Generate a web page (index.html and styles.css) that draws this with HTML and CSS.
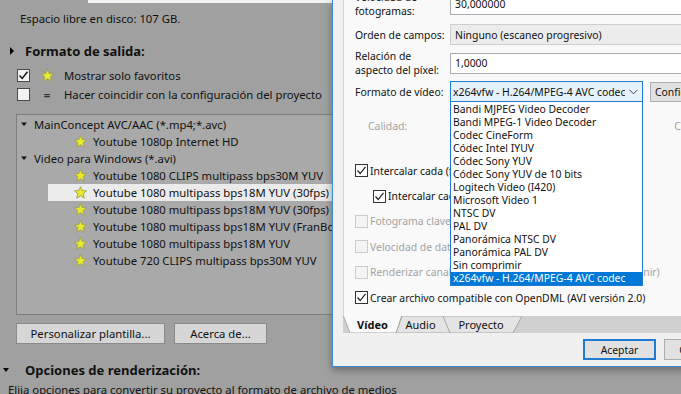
FILE: index.html
```html
<!DOCTYPE html>
<html lang="es">
  <head>
    <meta charset="UTF-8" />
    <meta name="viewport" content="width=device-width, initial-scale=1.0" />
    <title>Renderizar como - Formato de vídeo</title>
    <link rel="stylesheet" href="styles.css">
  </head>
  <body>
    <div class="screen">
      <!-- pagina de fondo (atenuada) -->
      <div class="page">
        <div class="top-field"></div>
        <p class="disk">Espacio libre en disco: 107 GB.</p>

        <h2 class="section">
          <span class="toggle"><svg width="5" height="8" viewBox="0 0 5 8"><polygon points="0,0 4,4 0,8" fill="#000"/></svg></span>
          Formato de salida:
        </h2>
        <div class="opt">
          <span class="box checked"><svg width="11" height="11" viewBox="0 0 11 11"><polyline points="1.5,5.5 4.2,8.5 9.5,1.8" fill="none" stroke="#111" stroke-width="1.4"/></svg></span>
          <span class="opt-icon"><svg class="star" width="13" height="13" viewBox="0 0 12 12"><polygon points="6,0.6 7.6,4.2 11.5,4.5 8.5,7.1 9.5,11.2 6,9 2.5,11.2 3.5,7.1 0.5,4.5 4.4,4.2" /></svg></span>
          Mostrar solo favoritos
        </div>
        <div class="opt">
          <span class="box"></span>
          <span class="opt-icon eq">=</span>
          Hacer coincidir con la configuración del proyecto
        </div>

        <div class="tree">
          <div class="group"><svg width="7" height="5" viewBox="0 0 7 5"><polygon points="0,0.5 6,0.5 3,4" fill="#111"/></svg>MainConcept AVC/AAC (*.mp4;*.avc)</div>
          <div class="item"><svg class="star" width="13" height="13" viewBox="0 0 12 12"><polygon points="6,0.6 7.6,4.2 11.5,4.5 8.5,7.1 9.5,11.2 6,9 2.5,11.2 3.5,7.1 0.5,4.5 4.4,4.2" /></svg>Youtube 1080p Internet HD</div>
          <div class="group"><svg width="7" height="5" viewBox="0 0 7 5"><polygon points="0,0.5 6,0.5 3,4" fill="#111"/></svg>Video para Windows (*.avi)</div>
          <div class="item"><svg class="star" width="13" height="13" viewBox="0 0 12 12"><polygon points="6,0.6 7.6,4.2 11.5,4.5 8.5,7.1 9.5,11.2 6,9 2.5,11.2 3.5,7.1 0.5,4.5 4.4,4.2" /></svg>Youtube 1080 CLIPS multipass bps30M YUV</div>
          <div class="item hover"><svg class="star" width="13" height="13" viewBox="0 0 12 12"><polygon points="6,0.6 7.6,4.2 11.5,4.5 8.5,7.1 9.5,11.2 6,9 2.5,11.2 3.5,7.1 0.5,4.5 4.4,4.2" /></svg>Youtube 1080 multipass bps18M YUV (30fps)</div>
          <div class="item"><svg class="star" width="13" height="13" viewBox="0 0 12 12"><polygon points="6,0.6 7.6,4.2 11.5,4.5 8.5,7.1 9.5,11.2 6,9 2.5,11.2 3.5,7.1 0.5,4.5 4.4,4.2" /></svg>Youtube 1080 multipass bps18M YUV (30fps)</div>
          <div class="item"><svg class="star" width="13" height="13" viewBox="0 0 12 12"><polygon points="6,0.6 7.6,4.2 11.5,4.5 8.5,7.1 9.5,11.2 6,9 2.5,11.2 3.5,7.1 0.5,4.5 4.4,4.2" /></svg>Youtube 1080 multipass bps18M YUV (FranBox)</div>
          <div class="item"><svg class="star" width="13" height="13" viewBox="0 0 12 12"><polygon points="6,0.6 7.6,4.2 11.5,4.5 8.5,7.1 9.5,11.2 6,9 2.5,11.2 3.5,7.1 0.5,4.5 4.4,4.2" /></svg>Youtube 1080 multipass bps18M YUV</div>
          <div class="item"><svg class="star" width="13" height="13" viewBox="0 0 12 12"><polygon points="6,0.6 7.6,4.2 11.5,4.5 8.5,7.1 9.5,11.2 6,9 2.5,11.2 3.5,7.1 0.5,4.5 4.4,4.2" /></svg>Youtube 720 CLIPS multipass bps30M YUV</div>
        </div>

        <div class="page-buttons">
          <button class="page-btn wide">Personalizar plantilla...</button>
          <button class="page-btn">Acerca de...</button>
        </div>

        <h2 class="section second">
          <span class="toggle"><svg width="6" height="4" viewBox="0 0 6 4"><polygon points="0,0 6,0 3,4" fill="#000"/></svg></span>
          Opciones de renderización:
        </h2>
        <p class="desc">Elija opciones para convertir su proyecto al formato de archivo de medios</p>
      </div>

      <!-- dialogo de plantilla -->
      <div class="dialog">
        <div class="tabpage">
          <div class="row first">
            <span class="lbl">Velocidad de<br>fotogramas:</span>
            <span class="field">30,000000</span>
          </div>
          <div class="row r2">
            <span class="lbl">Orden de campos:</span>
            <span class="field readonly">Ninguno (escaneo progresivo)</span>
          </div>
          <div class="row r3">
            <span class="lbl">Relación de<br>aspecto del píxel:</span>
            <span class="field">1,0000</span>
          </div>
          <div class="row r4">
            <span class="lbl">Formato de vídeo:</span>
            <span class="select">
              <span class="select-text">x264vfw - H.264/MPEG-4 AVC codec</span>
              <svg width="9" height="6" viewBox="0 0 9 6"><polyline points="0.5,0.8 4.5,4.8 8.5,0.8" fill="none" stroke="#444" stroke-width="1"/></svg>
            </span>
            <button class="dlg-btn config">Configurar...</button>
          </div>
          <div class="quality">
            <span>Calidad:</span>
            <span class="q2">Cuantificador:</span>
          </div>

          <div class="checks">
            <div class="chk"><span class="cb on"><svg width="11" height="11" viewBox="0 0 11 11"><polyline points="1.5,5.5 4.2,8.5 9.5,1.8" fill="none" stroke="#222" stroke-width="1.2"/></svg></span>Intercalar cada (fotogramas): 1</div>
            <div class="chk sub"><span class="cb on"><svg width="11" height="11" viewBox="0 0 11 11"><polyline points="1.5,5.5 4.2,8.5 9.5,1.8" fill="none" stroke="#222" stroke-width="1.2"/></svg></span>Intercalar cada bloque de audio</div>
            <div class="chk off"><span class="cb"></span>Fotograma clave cada (fotogramas)</div>
            <div class="chk off"><span class="cb"></span>Velocidad de datos (KB/segundo)</div>
            <div class="chk off"><span class="cb"></span>Renderizar canal alfa (si el códec lo permite y sin predefinir)</div>
            <div class="chk"><span class="cb on"><svg width="11" height="11" viewBox="0 0 11 11"><polyline points="1.5,5.5 4.2,8.5 9.5,1.8" fill="none" stroke="#222" stroke-width="1.2"/></svg></span>Crear archivo compatible con OpenDML (AVI versión 2.0)</div>
          </div>
        </div>

        <div class="tabstrip">
          <svg class="tab-shapes" width="400" height="17" viewBox="0 0 400 17">
            <polygon points="97,0 179,0 170,17 107,17" fill="#e4e4e4" stroke="#a8a8a8" stroke-width="1"/>
            <polygon points="59,0 100,0 107,17 53,17" fill="#e4e4e4" stroke="#a8a8a8" stroke-width="1"/>
            <polygon points="0,-1 59,-1 53,17 7,17" fill="#f9f9f9" stroke="#a8a8a8" stroke-width="1"/>
          </svg>
          <span class="tab active">Vídeo</span>
          <span class="tab">Audio</span>
          <span class="tab">Proyecto</span>
        </div>

        <div class="footer">
          <button class="dlg-btn default">Aceptar</button>
          <button class="dlg-btn">Cancelar</button>
        </div>

        <!-- lista desplegable abierta -->
        <ul class="dropdown">
          <li>Bandi MJPEG Video Decoder</li>
          <li>Bandi MPEG-1 Video Decoder</li>
          <li>Codec CineForm</li>
          <li>Códec Intel IYUV</li>
          <li>Códec Sony YUV</li>
          <li>Códec Sony YUV de 10 bits</li>
          <li>Logitech Video (I420)</li>
          <li>Microsoft Video 1</li>
          <li>NTSC DV</li>
          <li>PAL DV</li>
          <li>Panorámica NTSC DV</li>
          <li>Panorámica PAL DV</li>
          <li>Sin comprimir</li>
          <li class="selected">x264vfw - H.264/MPEG-4 AVC codec</li>
        </ul>
      </div>
    </div>
  </body>
</html>
```

FILE: styles.css
```css
/* styles.css */
body {
  margin: 0;
  font-family: "Noto Sans", "Open Sans", sans-serif;
  font-size: 11.3px;
  color: #111;
  background: #9f9f9f;
}

.screen {
  position: relative;
  width: 681px;
  height: 394px;
  overflow: hidden;
  background: #a0a0a0;
}

/* ---- pagina atenuada ---- */
.page {
  width: 681px;
}

.top-field {
  margin-left: 88px;
  width: 260px;
  height: 3px;
  background: #f2f2f2;
}

.disk {
  margin: 8px 0 0 20px;
  line-height: 16px;
}

.section {
  display: flex;
  align-items: center;
  margin: 15px 0 0;
  height: 18px;
  font-size: 13px;
  font-weight: bold;
}

.section .toggle {
  display: flex;
  justify-content: center;
  width: 25px;
}

.section.second {
  margin-top: 17px;
}

.section.second .toggle {
  justify-content: flex-start;
  padding-left: 3px;
  box-sizing: border-box;
}

.opt {
  display: flex;
  align-items: center;
  height: 19px;
  padding-left: 17px;
}

.section + .opt {
  margin-top: 6px;
}

.box {
  width: 11px;
  height: 11px;
  border: 1px solid #4a4a4a;
  background: #f3f3f3;
  display: flex;
  align-items: center;
  justify-content: center;
}

.opt-icon {
  width: 34px;
  display: flex;
  justify-content: center;
}

.eq {
  font-weight: bold;
  color: #333;
}

.star {
  fill: #e9ea2c;
  stroke: #9d9c55;
  stroke-width: 0.8;
}

.tree {
  margin: 10px 0 0 16px;
  width: 340px;
  height: 198px;
  border: 1px solid #7e7e7e;
  background: #a9a9a9;
  padding-top: 1px;
  white-space: nowrap;
}

.group {
  display: flex;
  align-items: center;
  height: 17px;
  padding-left: 4px;
}

.group svg {
  margin-right: 6px;
}

.item {
  display: flex;
  align-items: center;
  height: 17px;
  margin-left: 31px;
  padding-left: 26px;
}

.item .star {
  margin-right: 6px;
}

.item.hover {
  background: #ebebeb;
}

.page-buttons {
  display: flex;
  gap: 9px;
  margin: 8px 0 0 16px;
}

.page-btn {
  height: 21px;
  width: 93px;
  padding: 0;
  font: inherit;
  color: #111;
  background: #d6d6d6;
  border: 1px solid #8a8a8a;
}

.page-btn.wide {
  width: 149px;
}

.desc {
  margin: 3px 0 0 8px;
  line-height: 16px;
  white-space: nowrap;
}

/* ---- dialogo ---- */
.dialog {
  position: absolute;
  left: 332px;
  top: 0;
  width: 420px;
  height: 366px;
  font-size: 10.4px;
  background: #f0f0f0;
  border-left: 1px solid #3d8ad6;
  border-bottom: 1px solid #3d8ad6;
  box-shadow: 0 3px 8px rgba(0, 0, 0, 0.35);
}

.tabpage {
  margin-left: 10px;
  height: 316px;
  background: #f9f9f9;
  border-left: 1px solid #d4d4d4;
  padding-left: 11px;
  overflow: hidden;
}

.row {
  display: flex;
  align-items: center;
  line-height: 14px;
}

.row.first {
  height: 22px;
  margin-top: -7px;
}

.row.r2 {
  height: 21px;
  margin-top: 9px;
}

.row.r3 {
  height: 28px;
  margin-top: 4px;
}

.row.r4 {
  height: 21px;
  margin-top: 4px;
}

.lbl {
  width: 95px;
  flex: none;
}

.field {
  flex: none;
  width: 300px;
  height: 21px;
  box-sizing: border-box;
  border: 1px solid #a9abb1;
  background: #fff;
  padding-left: 4px;
  display: flex;
  align-items: center;
}

.field.readonly {
  background: #ececec;
  border-color: #cdcdcd;
}

.select {
  flex: none;
  width: 193px;
  height: 21px;
  box-sizing: border-box;
  border: 1px solid #1f7ad2;
  background: #e5f1fb;
  display: flex;
  align-items: center;
  padding: 0 4px 0 2px;
  overflow: hidden;
}

.select-text {
  flex: 1;
  overflow: hidden;
  white-space: nowrap;
}

.select svg {
  margin-left: 4px;
}

.dlg-btn {
  flex: none;
  width: 73px;
  height: 21px;
  padding: 0;
  font: inherit;
  color: #111;
  background: #e1e1e1;
  border: 1px solid #adadad;
}

.dlg-btn.config {
  width: 80px;
  height: 20px;
  margin-left: 7px;
  text-align: left;
  padding-left: 4px;
}

.quality {
  display: flex;
  margin-top: 17px;
  padding-left: 13px;
  line-height: 14px;
  color: #a3a3a3;
}

.quality .q2 {
  margin-left: 267px;
}

.checks {
  margin-top: 25px;
}

.chk {
  display: flex;
  align-items: center;
  height: 25.4px;
  white-space: nowrap;
}

.chk.sub {
  padding-left: 18px;
}

.chk.off {
  color: #a3a3a3;
}

.cb {
  flex: none;
  width: 11px;
  height: 11px;
  border: 1px solid #333;
  background: #fff;
  margin-right: 2px;
  display: flex;
  align-items: center;
  justify-content: center;
}

.chk.off .cb {
  border-color: #cccccc;
  background: #f4f4f4;
}

.tabstrip {
  display: flex;
  align-items: center;
  position: relative;
  margin-left: 10px;
  height: 17px;
  background: #d0d0d0;
  font-size: 11px;
}

.tab-shapes {
  position: absolute;
  left: 0;
  top: 0;
}

.tab {
  position: relative;
  text-align: center;
}

.tab:nth-of-type(1) {
  width: 59px;
  font-weight: bold;
}

.tab:nth-of-type(2) {
  width: 37px;
}

.tab:nth-of-type(3) {
  width: 84px;
}

.footer {
  display: flex;
  gap: 8px;
  padding: 6px 0 0 250px;
}

.dlg-btn.default {
  border: 2px solid #1f7ad2;
}

.dropdown {
  position: absolute;
  left: 117px;
  top: 101px;
  width: 193px;
  margin: 0;
  padding: 1px 0 0;
  box-sizing: border-box;
  height: 185px;
  list-style: none;
  background: #fff;
  border: 1px solid #1f7ad2;
}

.dropdown li {
  height: 13px;
  line-height: 13px;
  padding-left: 2px;
  white-space: nowrap;
}

.dropdown li.selected {
  background: #0078d7;
  color: #fff;
}
```
